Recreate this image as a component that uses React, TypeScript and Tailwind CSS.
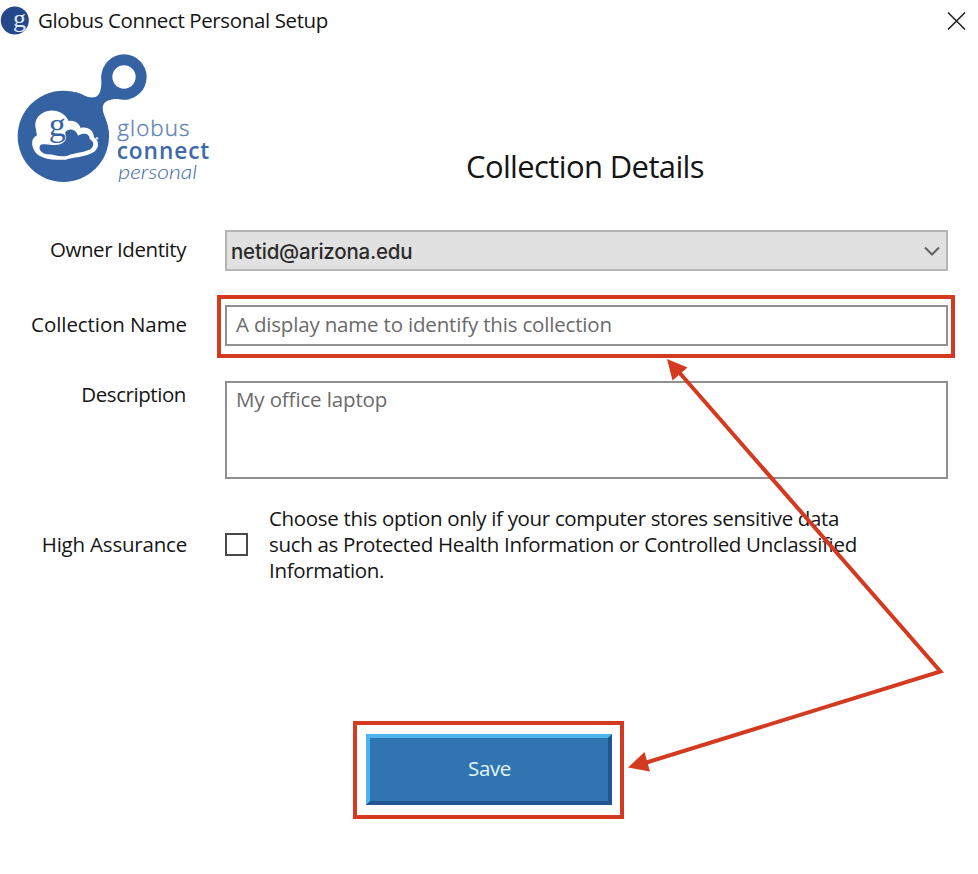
import type { ReactNode } from "react";

function AppIcon() {
  return (
    <svg className="size-[29px] shrink-0" viewBox="0 0 29 29">
      <circle cx="14.8" cy="14.5" r="14" fill="#24488a" />
      <text x="13" y="21" fontFamily="Liberation Serif, serif" fontSize="26" fill="#dfe7f3">g</text>
    </svg>
  );
}

function Logo() {
  return (
    <svg className="h-[156px] w-[230px] shrink-0" viewBox="0 0 690 468">
      <g fill="#3562a3">
        <circle cx="190" cy="277" r="137" />
        <circle cx="372" cy="99" r="68" />
        <path d="M225 144C250 150 262 163 282 160C300 156 306 138 304 95L345 95L390 166C366 168 349 161 326 169C307 176 305 190 312 212C319 232 325 250 327 277L190 277Z" />
      </g>
      <circle cx="372" cy="99" r="35" fill="#fff" />
      <path
        fill="#fff"
        d="M108 256C99 224 124 202 149 200C178 198 197 212 206 231C224 228 237 238 242 252C264 247 281 259 282 280C297 290 300 309 283 323C258 340 216 339 198 347C160 349 117 345 103 320C92 300 95 282 111 274C110 268 108 262 108 256Z"
      />
      <path
        fill="#3562a3"
        d="M122 302C138 298 150 303 165 303C184 303 195 296 196 280L196 264C208 251 228 255 234 275C252 264 270 270 269 285C285 293 282 311 267 318C240 328 219 327 201 336C175 340 162 331 143 331C125 330 112 314 122 302Z"
      />
      <circle cx="291" cy="283" r="4" fill="#d7e1ef" />
      <text x="146" y="275" fontFamily="Liberation Serif, serif" fontSize="102" fill="#3562a3" stroke="#fff" strokeWidth="4" paintOrder="stroke">g</text>
      <text x="352" y="276" fontFamily="Open Sans, sans-serif" fontWeight="300" fontSize="67" textLength="216" fill="#5b80b5" stroke="#5b80b5" strokeWidth="1">globus</text>
      <text x="350" y="344" fontFamily="Open Sans, sans-serif" fontWeight="600" fontSize="68" textLength="278" fill="#3e69a8">connect</text>
      <text x="355" y="405" fontFamily="Lato, sans-serif" fontStyle="italic" fontWeight="300" fontSize="60" textLength="236" lengthAdjust="spacingAndGlyphs" fill="#3e69a8">personal</text>
    </svg>
  );
}

function Label({ children }: { children: ReactNode }) {
  return <div className="w-[187px] shrink-0 text-right">{children}</div>;
}

function Arrows() {
  return (
    <svg className="pointer-events-none absolute inset-0 h-[874px] w-[978px]" viewBox="0 0 978 874" fill="none">
      <path d="M678 371L940.500 671.500L645 763" stroke="#d33a20" strokeWidth="4" />
      <path d="M667 359L687.500 367.500L672.500 380.500Z" fill="#d33a20" />
      <path d="M628 767.500L644.500 752L650 771.500Z" fill="#d33a20" />
    </svg>
  );
}

export default function App() {
  return (
    <main className="relative h-[874px] w-[978px] overflow-hidden bg-white font-['Open_Sans','Noto_Sans',sans-serif] text-[20.5px] leading-[26px] text-[#151515]">
      <header className="flex h-[44px] items-start justify-between pt-[6px] pr-[12px]">
        <div className="flex items-center">
          <AppIcon />
          <h1 className="ml-[9px] pb-[2px] tracking-[-0.38px]">Globus Connect Personal Setup</h1>
        </div>
        <svg className="mt-[5px] size-[20px]" viewBox="0 0 20 20">
          <path d="M2 1.500L19 18.500M19 1.500L2 18.500" stroke="#222" strokeWidth="1.6" />
        </svg>
      </header>

      <div className="flex h-[186px]">
        <Logo />
        <h2 className="ml-[236px] pt-[102px] text-[31px] leading-[40px] tracking-[-0.63px] whitespace-nowrap">Collection Details</h2>
      </div>

      <div className="flex h-[41px] items-center gap-[38px]">
        <Label>
          <span className="block pr-px pb-[4px] tracking-[-0.43px]">Owner Identity</span>
        </Label>
        <div className="flex h-[41px] w-[723px] items-center justify-between border-2 border-[#b5b5b5] bg-[#e1e1e1] pr-[6px] pl-[4px]">
          <span className="pt-[2px] font-['Inter',sans-serif] font-medium tracking-[-0.22px] text-[#2b2b2b]">netid@arizona.edu</span>
          <svg className="size-[16px]" viewBox="0 0 16 16">
            <path d="M1 4.500L8 11.500L15 4.500" fill="none" stroke="#606060" strokeWidth="2" />
          </svg>
        </div>
      </div>

      <div className="mt-[24px] flex h-[63px] items-center gap-[30px]">
        <Label>
          <span className="block pb-[5px] tracking-[-0.07px]">Collection Name</span>
        </Label>
        <div className="h-[63px] w-[738px] border-4 border-[#d33a20] px-[4px] pt-[6px]">
          <div className="flex h-[41px] w-[723px] items-center border-2 border-[#909090] pb-[3px] pl-[9px] tracking-[-0.18px] text-[#6a6a6a]">
            A display name to identify this collection
          </div>
        </div>
      </div>

      <div className="mt-[23px] flex h-[98px] gap-[38px]">
        <Label>
          <span className="block pr-px tracking-[-0.43px]">Description</span>
        </Label>
        <div className="h-[98px] w-[723px] border-2 border-[#909090] pt-[3px] pl-[9px] tracking-[-0.13px] text-[#6a6a6a]">My office laptop</div>
      </div>

      <div className="mt-[26px] flex h-[78px] items-center">
        <Label>
          <span className="tracking-[-0.2px]">High Assurance</span>
        </Label>
        <div className="ml-[38px] size-[23px] shrink-0 border-2 border-[#484848]" />
        <p className="ml-[21px] tracking-[-0.33px] whitespace-nowrap">
          Choose this option only if your computer stores sensitive data
          <br />
          such as Protected Health Information or Controlled Unclassified
          <br />
          Information.
        </p>
      </div>

      <div className="mt-[138px] ml-[353px] h-[98px] w-[271px] border-4 border-[#d33a20] px-[9px] pt-[9px]">
        <button className="block h-[71px] w-[246px] border-4 border-t-[#4cb4ef] border-r-[#215693] border-b-[#215693] border-l-[#4cb4ef] bg-[#3075b1] pb-[3px] pl-px tracking-[-0.4px] text-[#e3f5ff]">Save</button>
      </div>

      <Arrows />
    </main>
  );
}
